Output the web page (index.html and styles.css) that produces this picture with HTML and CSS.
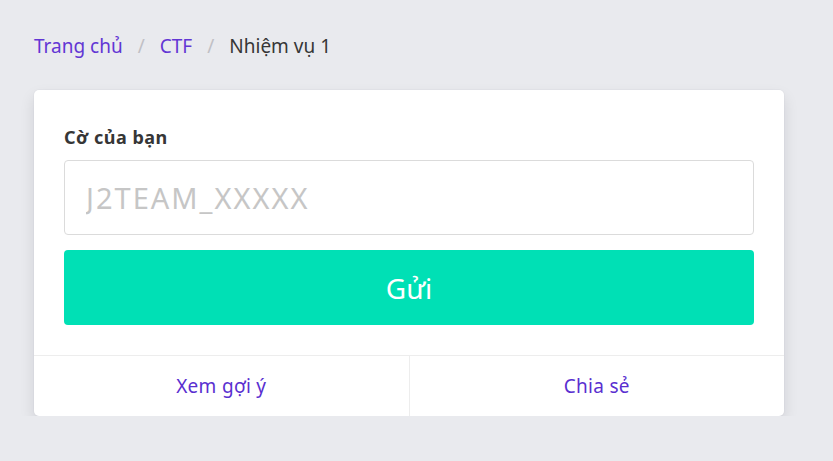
FILE: index.html
```html
<!DOCTYPE html>
<html lang="vi">
<head>
<meta charset="utf-8">
<link rel="stylesheet" href="styles.css">
</head>
<body>
<div class="page">
  <nav class="breadcrumb">
    <a class="crumb link" href="#">Trang chủ</a>
    <span class="sep">/</span>
    <a class="crumb link" href="#">CTF</a>
    <span class="sep">/</span>
    <span class="crumb current">Nhiệm vụ 1</span>
  </nav>
  <div class="card">
    <div class="card-body">
      <label class="label">Cờ của bạn</label>
      <input class="input" type="text" placeholder="J2TEAM_XXXXX">
      <button class="button">Gửi</button>
    </div>
    <div class="card-footer">
      <a class="footer-item" href="#">Xem gợi ý</a>
      <a class="footer-item" href="#">Chia sẻ</a>
    </div>
  </div>
</div>
</body>
</html>
```
FILE: styles.css
```css
html, body {
  margin: 0;
  padding: 0;
  background: #e9eaee;
  font-family: "Noto Sans", "Open Sans", sans-serif;
}
.page {
  padding: 30px 49px 0 34px;
}
.breadcrumb {
  display: flex;
  align-items: center;
  font-size: 19px;
  height: 32px;
}
.crumb { text-decoration: none; }
.link { color: #6236d4; }
.current { color: #363636; }
.sep {
  color: #c0c0c5;
  padding: 0 15px;
}
.card {
  margin-top: 28px;
  background: #fff;
  border-radius: 5px;
  box-shadow: 0 7px 15px rgba(10, 10, 30, 0.11), 0 0 0 1px rgba(10, 10, 30, 0.02);
  width: 750px;
}
.card-body {
  padding: 30px;
  display: flex;
  flex-direction: column;
}
.label {
  font-weight: 700;
  font-size: 18px;
  letter-spacing: 0.5px;
  color: #363636;
  line-height: 30px;
  margin-top: 2px;
  margin-bottom: 8px;
}
.input {
  box-sizing: border-box;
  height: 75px;
  border: 1px solid #dbdbdb;
  border-radius: 4px;
  padding: 0 21px;
  font-family: inherit;
  font-size: 29px;
  letter-spacing: 2px;
  color: #363636;
  outline: none;
}
.input::placeholder { color: #c6c6c6; }
.button {
  margin-top: 15px;
  height: 75px;
  border: none;
  border-radius: 4px;
  background: #00e0b5;
  color: #fff;
  font-family: inherit;
  font-size: 28px;
}
.card-footer {
  display: flex;
  border-top: 1px solid #ededed;
  height: 60px;
}
.footer-item {
  flex: 1;
  display: flex;
  align-items: center;
  justify-content: center;
  color: #5a2fd0;
  text-decoration: none;
  font-size: 19px;
  letter-spacing: 0.3px;
}
.footer-item + .footer-item {
  border-left: 1px solid #ededed;
}
```
